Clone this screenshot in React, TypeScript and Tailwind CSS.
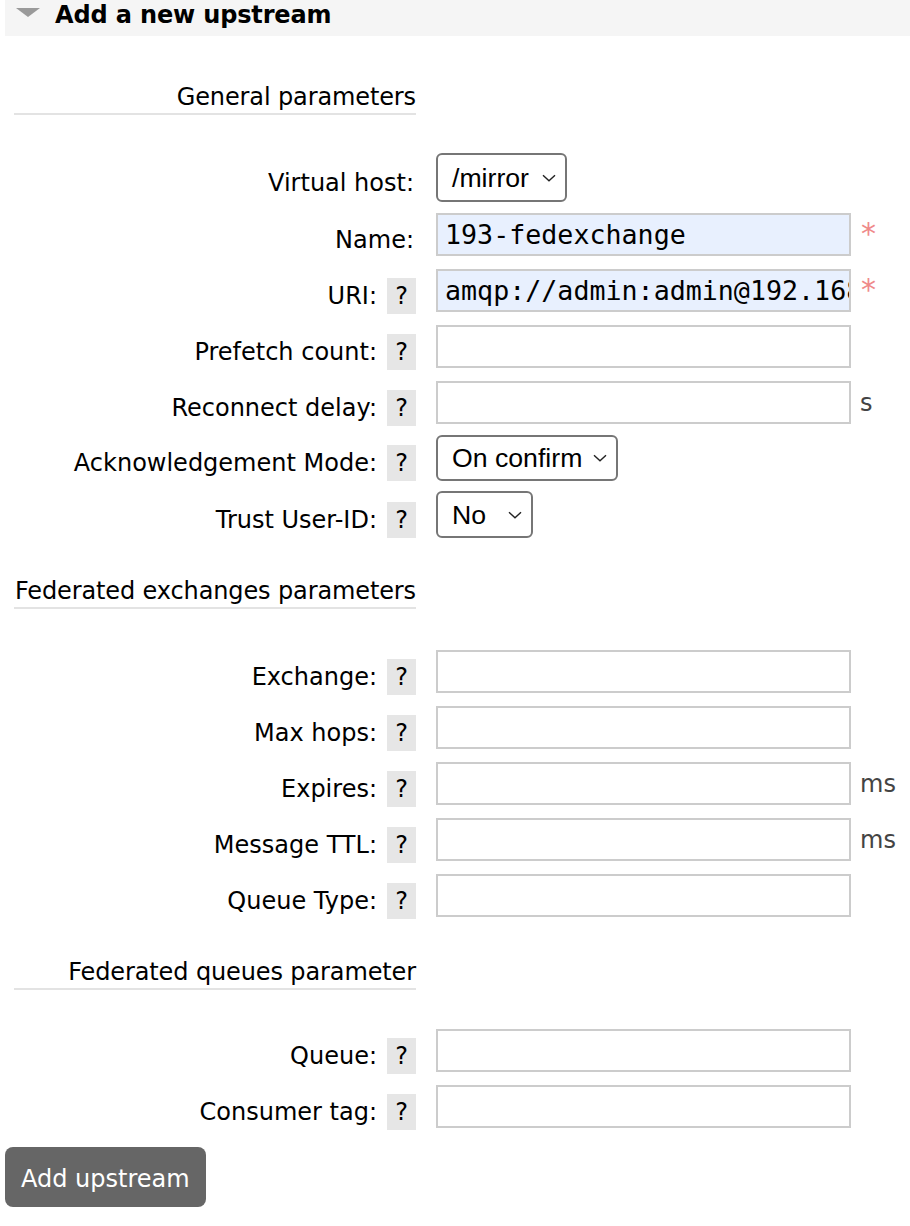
import React from 'react';

type Field = {
  label: string;
  help?: boolean;
  kind: 'text' | 'select';
  value?: string;
  filled?: boolean;
  required?: boolean;
  unit?: string;
  selectClass?: string;
  gap: string;
};

const general: Field[] = [
  { label: 'Virtual host', kind: 'select', value: '/mirror', selectClass: 'w-[131px] h-[49px]', gap: 'mt-[38px]' },
  { label: 'Name', kind: 'text', value: '193-fedexchange', filled: true, required: true, gap: 'mt-[11px]' },
  { label: 'URI', help: true, kind: 'text', value: 'amqp://admin:admin@192.168.1.193', filled: true, required: true, gap: 'mt-[13px]' },
  { label: 'Prefetch count', help: true, kind: 'text', gap: 'mt-[13px]' },
  { label: 'Reconnect delay', help: true, kind: 'text', unit: 's', gap: 'mt-[13px]' },
  { label: 'Acknowledgement Mode', help: true, kind: 'select', value: 'On confirm', selectClass: 'w-[182px] h-[46px]', gap: 'mt-[11px]' },
  { label: 'Trust User-ID', help: true, kind: 'select', value: 'No', selectClass: 'w-[97px] h-[47px]', gap: 'mt-[10px]' },
];

const exchanges: Field[] = [
  { label: 'Exchange', help: true, kind: 'text', gap: 'mt-[41px]' },
  { label: 'Max hops', help: true, kind: 'text', gap: 'mt-[13px]' },
  { label: 'Expires', help: true, kind: 'text', unit: 'ms', gap: 'mt-[13px]' },
  { label: 'Message TTL', help: true, kind: 'text', unit: 'ms', gap: 'mt-[13px]' },
  { label: 'Queue Type', help: true, kind: 'text', gap: 'mt-[13px]' },
];

const queues: Field[] = [
  { label: 'Queue', help: true, kind: 'text', gap: 'mt-[39px]' },
  { label: 'Consumer tag', help: true, kind: 'text', gap: 'mt-[13px]' },
];

const Chevron = () => (
  <svg width="14" height="8" viewBox="0 0 14 8" className="shrink-0">
    <polyline points="1,1.2 7,6.8 13,1.2" fill="none" stroke="#222" strokeWidth="1.4" />
  </svg>
);

const SectionTitle = ({ title, className }: { title: string; className: string }) => (
  <div
    className={`w-[402px] text-right leading-[24px] pb-[4px] tracking-[-0.12px] border-b-2 border-[#e3e3e3] whitespace-nowrap ${className}`}
  >
    {title}
  </div>
);

const FieldRow = ({ field }: { field: Field }) => (
  <div className={`flex items-center ${field.gap}`}>
    <div
      className={`w-[402px] h-[36px] shrink-0 translate-y-[5px] flex items-center justify-end gap-[10px] ${
        field.help ? '' : 'pr-[2px]'
      }`}
    >
      <span className="whitespace-nowrap">{field.label}:</span>
      {field.help && (
        <span className="w-[29px] h-[36px] bg-[#e6e6e6] flex items-center justify-center">?</span>
      )}
    </div>

    {field.kind === 'text' ? (
      <input
        type="text"
        readOnly
        value={field.value ?? ''}
        className={`ml-[20px] w-[415px] h-[43px] shrink-0 border-2 border-[#cccccc] pl-[7px] pr-0 outline-none text-black font-['DejaVu_Sans_Mono',Menlo,monospace] text-[26.67px] ${
          field.filled ? 'bg-[#e8f0fe]' : 'bg-white'
        }`}
      />
    ) : (
      <div
        className={`ml-[20px] shrink-0 border-2 border-[#767676] rounded-[6px] bg-white flex items-center justify-between pl-[14px] pr-[9px] font-['Liberation_Sans',Arial,sans-serif] text-[26.67px] text-black ${field.selectClass}`}
      >
        <span className="whitespace-nowrap">{field.value}</span>
        <Chevron />
      </div>
    )}

    {field.required && (
      <span className="ml-[10px] h-[36px] flex items-center text-[30px] -translate-y-[1px] text-[#ef8a8a]">*</span>
    )}
    {field.unit && (
      <span className="ml-[9px] h-[36px] flex items-center text-[#444]">{field.unit}</span>
    )}
  </div>
);

export default function App() {
  return (
    <div className="w-[910px] min-h-[1226px] bg-white pl-[5px] text-black font-['DejaVu_Sans',Verdana,sans-serif] text-[24px]">
      <div className="h-[36px] bg-[#f5f5f5] flex items-start">
        <svg width="24" height="9" viewBox="0 0 24 9" className="ml-[11px] mt-[8px] shrink-0">
          <polygon points="0,0 24,0 12,9" fill="#9a9a9a" />
        </svg>
        <h2 className="ml-[15px] pt-[1px] leading-[28px] font-bold tracking-[-0.15px] whitespace-nowrap">
          Add a new upstream
        </h2>
      </div>

      <form className="pl-[9px]" onSubmit={(e) => e.preventDefault()}>
        <SectionTitle title="General parameters" className="mt-[49px]" />
        {general.map((f) => (
          <FieldRow key={f.label} field={f} />
        ))}

        <SectionTitle title="Federated exchanges parameters" className="mt-[41px]" />
        {exchanges.map((f) => (
          <FieldRow key={f.label} field={f} />
        ))}

        <SectionTitle title="Federated queues parameter" className="mt-[43px]" />
        {queues.map((f) => (
          <FieldRow key={f.label} field={f} />
        ))}
      </form>

      <button
        type="button"
        className="mt-[19px] h-[60px] px-[16px] pt-[3px] rounded-[8px] bg-[#666666] text-white leading-[24px]"
      >
        Add upstream
      </button>
    </div>
  );
}
